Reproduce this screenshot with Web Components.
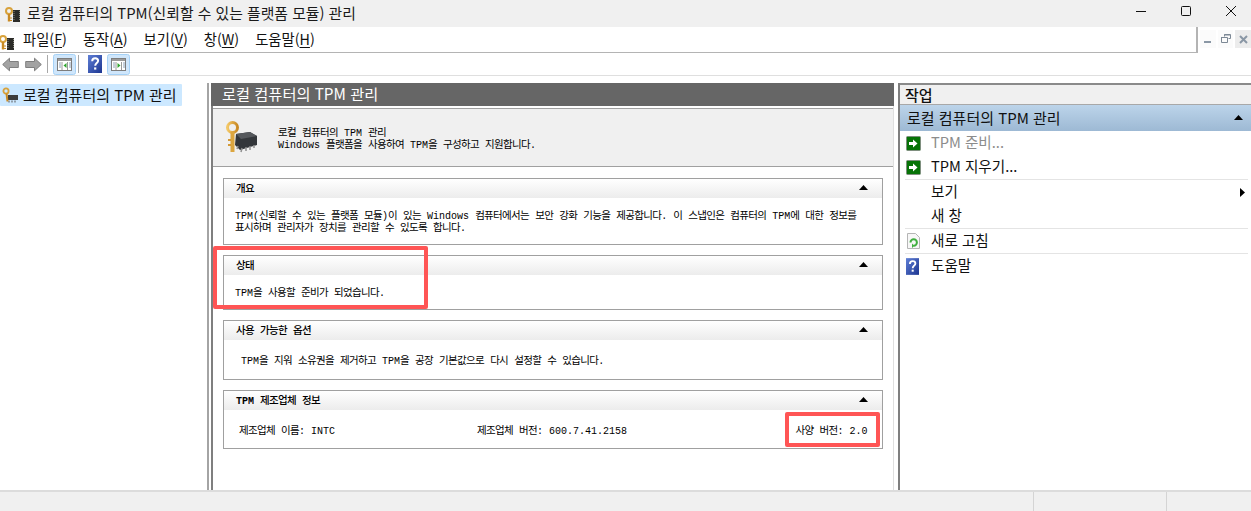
<!DOCTYPE html>
<html lang="ko">
<head>
<meta charset="utf-8">
<title>TPM 관리</title>
<style>
  html, body { margin: 0; height: 100%; background: #fff; overflow: hidden; }
  body { font-family: "Noto Sans CJK KR", "Noto Sans", sans-serif; }
</style>
</head>
<body>
<mmc-window></mmc-window>

<script>
const KEY_ICON = `<svg width="16" height="16" viewBox="0 0 16 16">
  <rect x="9" y="3" width="8" height="12" fill="#2b2b28"/>
  <path d="M10 4v10M15.500 4v10" stroke="#8b8b80" stroke-dasharray="1 1"/>
  <circle cx="5" cy="4" r="3" fill="none" stroke="#d8a23c" stroke-width="2"/>
  <path d="M5 7v7.500" stroke="#c98a24" stroke-width="2.400"/>
  <path d="M6 11h2M6 13.500h2" stroke="#c98a24"/>
</svg>`;

const helpIcon = (id, slot, w, h) => `<svg ${slot ? 'slot="icon"' : ''} width="${w}" height="${h}" viewBox="0 0 14 18">
  <defs><linearGradient id="${id}" x1="0" y1="0" x2="1" y2="1"><stop offset="0" stop-color="#5f7fd6"/><stop offset="1" stop-color="#1c3590"/></linearGradient></defs>
  <rect width="14" height="18" fill="url(#${id})"/>
  <path d="M4.200 6.200C4.200 4 5.600 3.200 7.200 3.200s2.900 1 2.900 2.600c0 2.200-2.900 2.400-2.900 5" fill="none" stroke="#fff" stroke-width="2"/>
  <rect x="6.100" y="12.400" width="2.200" height="2.200" fill="#fff"/>
</svg>`;

function paneButton(dir) {
  return `<svg width="23" height="21" viewBox="0 0 23 21">
    <rect x=".5" y=".5" width="22" height="20" rx="2" fill="#cfe6fb" stroke="#a6d2f7"/>
    <rect x="4.500" y="4.500" width="14" height="12" fill="#fff" stroke="#7d7d7d"/>
    <rect x="5" y="5" width="13" height="2" fill="#9a9a9a"/>
    <path d="M9 8v8M14.500 8v8" stroke="#9a9a9a"/>
    <path d="M6 9h2M6 11h2M6 13h2M16 9h2M16 11h2M16 13h2" stroke="#8aa0b8"/>
    <path d="${dir < 0 ? 'M13.500 9v5l-3-2.500z' : 'M10.500 9v5l3-2.500z'}" fill="#2fa52f"/>
  </svg>`;
}

// Gulim-like text: hangul advances 9px, latin and spaces 6px
class GulText extends HTMLElement {
  connectedCallback() {
    if (this.shadowRoot) return;
    const runs = this.textContent.split(/([\uAC00-\uD7A3]+)/).filter(Boolean);
    this.attachShadow({ mode: 'open' });
    this.shadowRoot.innerHTML = `<style>
        :host { font-size: 10.5px; color: #000; }
        :host([line]) { display: block; height: 12px; line-height: 12px; white-space: nowrap; }
        :host([line]) span { display: inline-block; height: 12px; line-height: 12px; }
        span { white-space: pre; }
        .h { font-family: "Noto Sans CJK KR", sans-serif; letter-spacing: -.66px; }
        .l { font-family: "Liberation Mono", monospace; font-size: 10px; }
        :host([bold]) .h { font-weight: 500; }
        :host([bold]) .l { font-weight: 700; }
      </style>` + runs.map(r => `<span class="${/[\uAC00-\uD7A3]/.test(r) ? 'h' : 'l'}">${r}</span>`).join('');
  }
}

class MmcTitlebar extends HTMLElement {
  connectedCallback() {
    this.attachShadow({ mode: 'open' });
    this.shadowRoot.innerHTML = `
      <style>
        :host { display: flex; align-items: center; height: 27px; background: #f0f0f0; padding-left: 4px; overflow: hidden; }
        .icon { width: 16px; height: 16px; margin-top: -4px; }
        .title { margin: -3px 0 0 7px; font-size: 14.850px; color: #1a1a1a; white-space: pre; flex: 1; }
        .ctl { width: 45px; height: 22px; margin-bottom: 5px; display: flex; align-items: center; justify-content: center; flex: none; }
        .ctl:last-child { margin-right: -2px; }
      </style>
      <span class="icon">${KEY_ICON}</span>
      <span class="title">로컬 컴퓨터의 TPM(신뢰할 수 있는 플랫폼 모듈) 관리</span>
      <span class="ctl"><svg width="10" height="10"><path d="M0 5.500h10" stroke="#111"/></svg></span>
      <span class="ctl"><svg width="10" height="10"><rect x=".5" y=".5" width="9" height="9" rx="1" fill="none" stroke="#111"/></svg></span>
      <span class="ctl"><svg width="10" height="10"><path d="M0 0l10 10M10 0L0 10" stroke="#111"/></svg></span>`;
  }
}

class MmcMenubar extends HTMLElement {
  connectedCallback() {
    const items = [['파일', 'F'], ['동작', 'A'], ['보기', 'V'], ['창', 'W'], ['도움말', 'H']];
    this.attachShadow({ mode: 'open' });
    this.shadowRoot.innerHTML = `
      <style>
        :host { display: flex; align-items: stretch; height: 26px; box-sizing: border-box; background: #fff; border-bottom: 1px solid #b4b4b4; }
        .icon { width: 16px; height: 16px; margin: 5px 9px 0 -2px; flex: none; }
        nav { display: flex; gap: 16px; flex: 1; align-items: center; font-size: 14.300px; color: #111; white-space: pre; padding-bottom: 2px; }
        u { text-underline-offset: 2px; }
        .mdi { width: 55px; margin-bottom: -1px; box-sizing: border-box; border-left: 2px solid #b4b4b4; padding: 3px 0 0 2px; display: flex; gap: 2px; background: #fff; }
        .b { width: 17px; height: 18px; background: #fbfbfb; display: flex; align-items: center; justify-content: center; }
        .b.x { background: #ececec; }
      </style>
      <span class="icon">${KEY_ICON}</span>
      <nav>${items.map(([t, k]) => `<span>${t}(<u>${k}</u>)</span>`).join('')}</nav>
      <div class="mdi">
        <span class="b"><svg width="9" height="9"><rect x="1" y="6" width="7" height="2" fill="#8a97a5"/></svg></span>
        <span class="b"><svg width="10" height="10"><path d="M3.500 2.500V.500h6v4h-2M.500 3.500h6v5h-6z" fill="none" stroke="#7c8895"/><path d="M3 1h6M0 3.500h6" stroke="#7c8895"/></svg></span>
        <span class="b x"><svg width="9" height="9"><path d="M1 1l7 7M8 1L1 8" stroke="#8a97a5" stroke-width="2"/></svg></span>
      </div>`;
  }
}

class MmcToolbar extends HTMLElement {
  connectedCallback() {
    const arrow = d => `<svg width="17" height="15" viewBox="0 0 17 14"><path d="${d}" fill="#a3a3a3" stroke="#7f7f7f"/></svg>`;
    this.attachShadow({ mode: 'open' });
    this.shadowRoot.innerHTML = `
      <style>
        :host { display: flex; align-items: center; height: 22px; background: #fff; border-bottom: 1px solid #dfdfdf; padding-left: 2px; }
        span, svg { display: block; flex: none; }
        .sep { width: 1px; height: 18px; background: #a8a8a8; }
      </style>
      <span>${arrow('M.700 7L7.500.700V4h8.800v6H7.500v3.300z')}</span>
      <span style="margin-left:6px">${arrow('M16.300 7L9.500.700V4H.700v6h8.800v3.300z')}</span>
      <span class="sep" style="margin-left:5px"></span>
      <span style="margin-left:5px">${paneButton(-1)}</span>
      <span class="sep" style="margin-left:2px"></span>
      <span style="margin-left:9px">${helpIcon('h1', false, 14, 18)}</span>
      <span style="margin-left:5px">${paneButton(1)}</span>`;
  }
}

class MmcTree extends HTMLElement {
  connectedCallback() {
    this.attachShadow({ mode: 'open' });
    this.shadowRoot.innerHTML = `
      <style>
        :host { display: block; width: 209px; flex: none; box-sizing: border-box; border-right: 2px solid #a4a4a4; background: #fff; padding-top: 1px; }
        .row { display: flex; align-items: center; width: 182px; height: 22px; background: #cce8ff; box-sizing: border-box; padding-left: 2px; border-radius: 1px; }
        .t { margin: 0 0 2px 5px; font-size: 15px; color: #111; white-space: pre; }
        svg { display: block; }
      </style>
      <div class="row">
        <svg width="16" height="16" viewBox="0 0 16 16">
          <rect x="6" y="8" width="10" height="5" fill="#3c3c3c"/>
          <path d="M7 13.500v2M10 13.500v2M13 13.500v2" stroke="#555"/>
          <circle cx="4" cy="4" r="2.600" fill="none" stroke="#d8a23c" stroke-width="1.800"/>
          <path d="M4.500 6.500l1 8" stroke="#c98a24" stroke-width="2"/>
        </svg>
        <span class="t">로컬 컴퓨터의 TPM 관리</span>
      </div>`;
  }
}

class MmcCard extends HTMLElement {
  connectedCallback() {
    this.attachShadow({ mode: 'open' });
    this.shadowRoot.innerHTML = `
      <style>
        :host { display: block; box-sizing: border-box; border: 1px solid #a0a0a0; height: var(--h); background: #fff; }
        .head { display: flex; align-items: center; justify-content: space-between; height: 19px; box-sizing: border-box; padding: 0 14px 2px 12px; background: linear-gradient(#fff, #ececec); }
        .body { padding: var(--pad, 11px 12px 0 12px); }
        svg { display: block; }
      </style>
      <div class="head">
        <slot name="title"></slot>
        <svg width="9" height="5"><path d="M4.500 0L9 5H0z" fill="#000"/></svg>
      </div>
      <div class="body"><slot></slot></div>`;
  }
}

class MmcCenter extends HTMLElement {
  connectedCallback() {
    this.attachShadow({ mode: 'open' });
    this.shadowRoot.innerHTML = `
      <style>
        :host { display: flex; flex-direction: column; flex: 1; min-width: 0; margin-left: 2px; box-sizing: border-box; border-left: 2px solid #7f7f7f; border-right: 1px solid #dfdfdf; background: #fff; position: relative; }
        .title { height: 23px; background: #666; color: #fff; font-size: 15.250px; padding-left: 11px; line-height: 21px; white-space: pre; margin: 0 -1px 0 -2px; }
        .intro { margin-top: 2px; height: 59px; box-sizing: border-box; background: #f0f0f0; border-top: 1px solid #a0a0a0; border-bottom: 1px solid #a0a0a0; display: flex; align-items: center; padding-left: 12px; }
        .txt { margin-left: 20px; display: flex; flex-direction: column; }
        .cards { display: flex; flex-direction: column; gap: 10px; padding: 11px 10px 0 10px; }
        .mark { position: absolute; box-sizing: border-box; border: 4px solid #ff5555; border-radius: 2px; }
        svg { display: block; }
      </style>
      <div class="title">로컬 컴퓨터의 TPM 관리</div>
      <div class="intro">
        <svg width="33" height="33" viewBox="0 0 33 33">
          <defs><linearGradient id="k" x1="0" x2="1"><stop offset="0" stop-color="#f3c766"/><stop offset="1" stop-color="#c98a24"/></linearGradient></defs>
          <path d="M11 13l14-2 7 4v9l-17 5-5-5z" fill="#33363a"/>
          <path d="M11 13l14-2 7 4-16 3z" fill="#55585c"/>
          <path d="M13 25l-1 3M17 27l-1 4M21 26l0 4M25 25l0 4M29 24l0 3" stroke="#8f8f8f" stroke-width="1.500"/>
          <circle cx="7.500" cy="6.500" r="5" fill="none" stroke="url(#k)" stroke-width="3"/>
          <path d="M7.500 11v20" stroke="#dca63f" stroke-width="4"/>
          <path d="M3 19h3M3 24h3" stroke="#d49a36" stroke-width="2"/>
        </svg>
        <div class="txt">
          <gul-text line>로컬 컴퓨터의 TPM 관리</gul-text>
          <gul-text line>Windows 플랫폼을 사용하여 TPM을 구성하고 지원합니다.</gul-text>
        </div>
      </div>
      <div class="cards">
        <mmc-card style="--h:67px;--pad:11px 12px 0 11px">
          <gul-text slot="title" bold>개요</gul-text>
          <gul-text line>TPM(신뢰할 수 있는 플랫폼 모듈)이 있는 Windows 컴퓨터에서는 보안 강화 기능을 제공합니다. 이 스냅인은 컴퓨터의 TPM에 대한 정보를</gul-text>
          <gul-text line>표시하며 관리자가 장치를 관리할 수 있도록 합니다.</gul-text>
        </mmc-card>
        <mmc-card style="--h:55px;--pad:11px 12px 0 11px">
          <gul-text slot="title" bold>상태</gul-text>
          <gul-text line>TPM을 사용할 준비가 되었습니다.</gul-text>
        </mmc-card>
        <mmc-card style="--h:60px;--pad:14px 12px 0 17px">
          <gul-text slot="title" bold>사용 가능한 옵션</gul-text>
          <gul-text line>TPM을 지워 소유권을 제거하고 TPM을 공장 기본값으로 다시 설정할 수 있습니다.</gul-text>
        </mmc-card>
        <mmc-card style="--h:59px;--pad:14px 0 0 15px">
          <gul-text slot="title" bold>TPM 제조업체 정보</gul-text>
          <div style="display:grid;grid-template-columns:238px 318.500px auto">
            <gul-text line>제조업체 이름: INTC</gul-text>
            <gul-text line>제조업체 버전: 600.7.41.2158</gul-text>
            <gul-text line>사양 버전: 2.0</gul-text>
          </div>
        </mmc-card>
      </div>
      <div class="mark" style="left:0;top:163px;width:215px;height:63px"></div>
      <div class="mark" style="left:572px;top:329px;width:95px;height:35px"></div>`;
  }
}

class MmcAction extends HTMLElement {
  connectedCallback() {
    this.attachShadow({ mode: 'open' });
    this.shadowRoot.innerHTML = `
      <style>
        :host { display: flex; align-items: center; height: 24px; padding-left: 6px; font-size: 14.600px; color: #111; }
        :host([disabled]) { color: #8c8c8c; }
        .i { width: 16px; height: 18px; margin-right: 9px; display: flex; align-items: center; flex: none; }
        .t { flex: 1; margin-bottom: 3px; }
      </style>
      <span class="i"><slot name="icon"></slot></span>
      <span class="t"><slot></slot></span>
      <slot name="end"></slot>`;
  }
}

class MmcActions extends HTMLElement {
  connectedCallback() {
    const go = `<svg slot="icon" width="15" height="15" viewBox="0 0 15 15"><rect x=".5" y=".5" width="14" height="14" rx="1" fill="#067306" stroke="#7f8f7f"/><path d="M3 6h4V3.500L11.500 7.500 7 11.500V9H3z" fill="#fff"/></svg>`;
    this.attachShadow({ mode: 'open' });
    this.shadowRoot.innerHTML = `
      <style>
        :host { display: block; width: 353px; flex: none; box-sizing: border-box; margin-left: 4px; border-left: 2px solid #7f7f7f; background: #fff; }
        .head { height: 22px; box-sizing: border-box; background: #f0f0f0; border-top: 2px solid #8a8a8a; border-bottom: 1px solid #a8a8a8; font-size: 15px; font-weight: 500; color: #111; padding-left: 5px; line-height: 20px; }
        .group { height: 26px; box-sizing: border-box; display: flex; align-items: center; justify-content: space-between; padding: 0 8px 2px 7px; font-size: 15px; color: #111; background: linear-gradient(#bcd4ea, #9db9d4); white-space: pre; }
        hr { margin: 0 3px 0 5px; border: 0; height: 1px; background: #e4e4e4; }
        svg { display: block; }
      </style>
      <div class="head">작업</div>
      <div class="group">로컬 컴퓨터의 TPM 관리<svg width="9" height="5"><path d="M4.500 0L9 5H0z" fill="#000"/></svg></div>
      <mmc-action disabled>${go}TPM 준비...</mmc-action>
      <mmc-action>${go}TPM 지우기...</mmc-action>
      <hr>
      <mmc-action>보기<svg slot="end" width="5" height="9" style="margin-right:6px"><path d="M0 0l5 4.500L0 9z" fill="#000"/></svg></mmc-action>
      <mmc-action>새 창</mmc-action>
      <hr>
      <mmc-action><svg slot="icon" width="13" height="16" viewBox="0 0 13 16" style="margin-left:1px"><path d="M.5.500h8l4 4v11H.5z" fill="#f7f7f7" stroke="#b5b5b5"/><path d="M3.500 9.500a3.200 3.200 0 1 1 3.200 3.200" fill="none" stroke="#3fae3f" stroke-width="2"/><path d="M5 10.500l2.500 2.300L5 15z" fill="#3fae3f"/></svg>새로 고침</mmc-action>
      <hr>
      <mmc-action>${helpIcon('h2', true, 13, 17)}도움말</mmc-action>`;
  }
}

class MmcStatusbar extends HTMLElement {
  connectedCallback() {
    this.attachShadow({ mode: 'open' });
    this.shadowRoot.innerHTML = `
      <style>
        :host { display: grid; grid-template-columns: 1033px 133px 1fr; height: 19px; background: #f0f0f0; }
        div + div { border-left: 1px solid #d4d4d4; }
      </style>
      <div></div><div></div><div></div>`;
  }
}

class MmcWindow extends HTMLElement {
  connectedCallback() {
    this.attachShadow({ mode: 'open' });
    this.shadowRoot.innerHTML = `
      <style>
        :host { display: flex; flex-direction: column; height: 511px; width: 1251px; overflow: hidden; }
        .panes { display: flex; flex: 1; min-height: 0; margin-top: 7px; border-bottom: 2px solid #dcdcdc; }
      </style>
      <mmc-titlebar></mmc-titlebar>
      <mmc-menubar></mmc-menubar>
      <mmc-toolbar></mmc-toolbar>
      <div class="panes">
        <mmc-tree></mmc-tree>
        <mmc-center></mmc-center>
        <mmc-actions></mmc-actions>
      </div>
      <mmc-statusbar></mmc-statusbar>`;
  }
}

customElements.define('gul-text', GulText);
customElements.define('mmc-card', MmcCard);
customElements.define('mmc-action', MmcAction);
customElements.define('mmc-titlebar', MmcTitlebar);
customElements.define('mmc-menubar', MmcMenubar);
customElements.define('mmc-toolbar', MmcToolbar);
customElements.define('mmc-tree', MmcTree);
customElements.define('mmc-center', MmcCenter);
customElements.define('mmc-actions', MmcActions);
customElements.define('mmc-statusbar', MmcStatusbar);
customElements.define('mmc-window', MmcWindow);
</script>
</body>
</html>
